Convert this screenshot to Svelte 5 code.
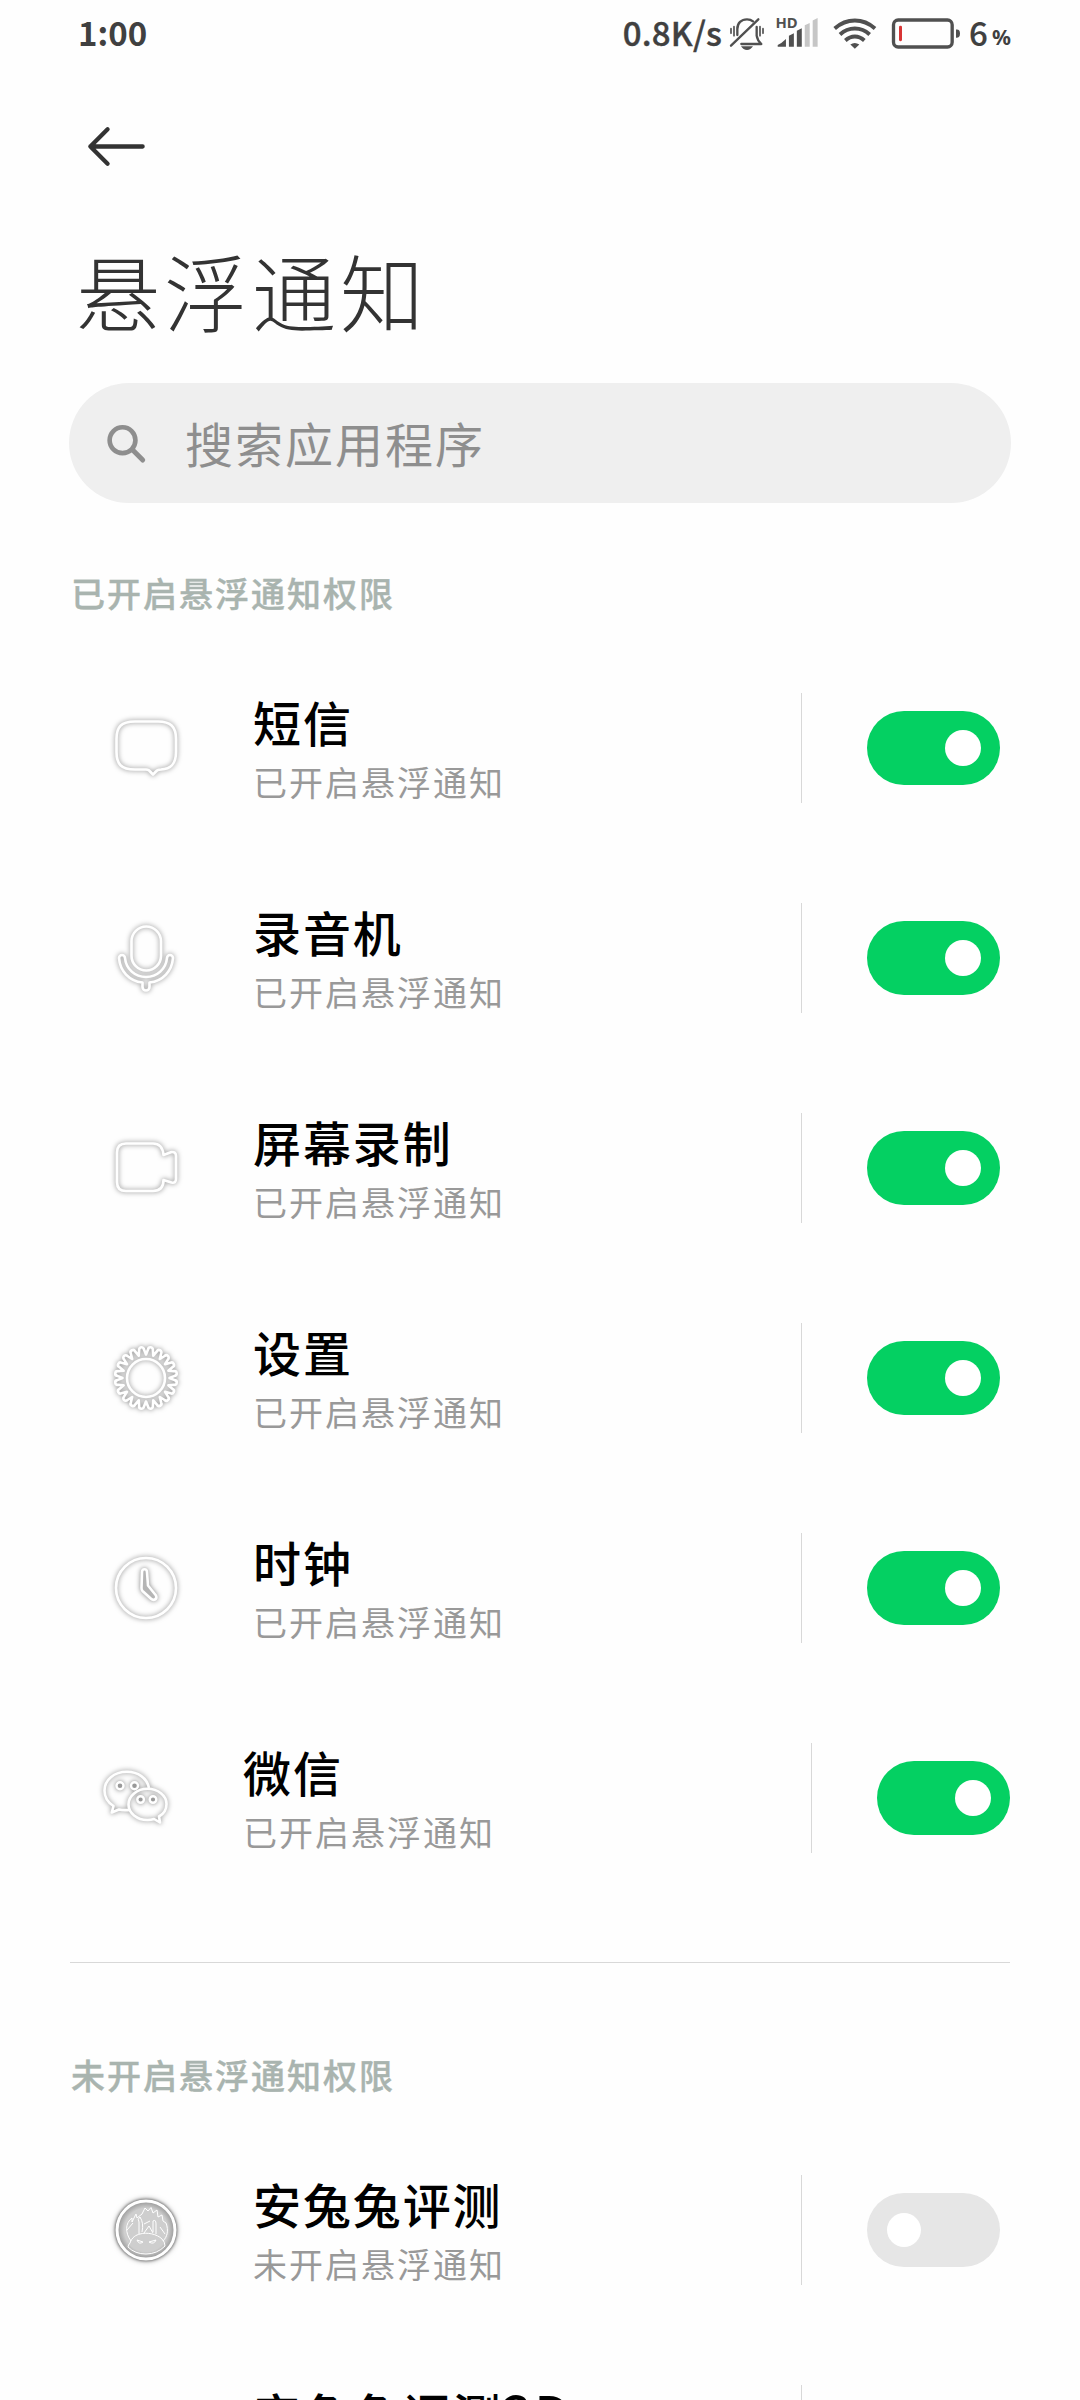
<script>
  let enabledApps = $state([
    { name: '短信', icon: 'message', on: true },
    { name: '录音机', icon: 'recorder', on: true },
    { name: '屏幕录制', icon: 'camera', on: true },
    { name: '设置', icon: 'settings', on: true },
    { name: '时钟', icon: 'clock', on: true },
    { name: '微信', icon: 'wechat', on: true, wide: true }
  ]);
  let disabledApps = $state([
    { name: '安兔兔评测', icon: 'antutu', on: false },
    { name: '安兔兔评测', suffix: '3D', icon: '', on: false }
  ]);

  // outline of the settings gear, 20 rounded teeth
  function gearPath(cx, cy, teeth) {
    const step = 360 / teeth;
    const point = (r, deg) => {
      const a = ((deg - 90) * Math.PI) / 180;
      return `${(cx + r * Math.cos(a)).toFixed(2)} ${(cy + r * Math.sin(a)).toFixed(2)}`;
    };
    let d = `M${point(23.5, 0)}`;
    for (let i = 0; i < teeth; i++) {
      const mid = i * step + step / 2;
      d += `L${point(28.8, mid - 4.8)}A2.4 2.4 0 0 1 ${point(28.8, mid + 4.8)}L${point(23.5, (i + 1) * step)}`;
    }
    return d + 'Z';
  }
  const gear = gearPath(56, 58, 20);
</script>

{#snippet appIcon(icon)}
  <svg class="app-icon" viewBox="0 -2 120 120">
    {#if icon === 'message'}
      <path d="M45 31.5H68C81 31.5 86 37 86 49V62C86 74 81 79 71 79.500Q67 79.500 65.500 82L63 84.500L60.500 82Q59 79.500 56 79.500H45C31 79.500 26.500 74 26.500 62V49C26.500 37 31 31.500 45 31.500Z" />
    {:else if icon === 'recorder'}
      <rect x="41.500" y="26.500" width="29.500" height="44" rx="14.750" />
      <path d="M29 58a3 3 0 0 1 6 0C36 69 45 77 56 77S76 69 77 58a3 3 0 0 1 6 0C82 71 73 81 59.500 82.500V87a3.500 3.500 0 0 1-7 0V82.500C39 81 30 71 29 58Z" />
    {:else if icon === 'camera'}
      <path d="M36 33.500H63Q72.500 33.500 73.500 45L81.500 42Q86 41.500 86 46V69Q86 73.500 81.500 72.500L73.500 70Q73.500 81 63 81H36Q27 81 27 72V42.500Q27 33.500 36 33.500Z" />
    {:else if icon === 'settings'}
      <path d={gear} />
      <circle cx="56" cy="58" r="19" />
    {:else if icon === 'clock'}
      <circle cx="56" cy="58" r="30" />
      <path class="hands" d="M52 42q.2-2.700 2.500-2.700t2.500 2.700L58 55.500L66 65.500q1.300 3-1.500 4.300q-2 .4-3.500-1L52.500 61Q51.500 60 51.500 58Z" />
    {:else if icon === 'wechat'}
      <path d="M69 48C67 38 58 31.800 47 31.800C34 31.800 24.500 40 24.500 50.500C24.500 57 28 62.500 33.500 66L31.800 72.500L39 69.500Q43 70.500 49.500 70" />
      <path d="M67.500 48.800C78 48.800 86.500 55.500 86.500 64C86.500 69.500 83.500 74 79 76.500L80 82.500L74 79Q71 80 67.500 80C57 80 48.500 73 48.500 64.500S57 48.800 67.500 48.800Z" />
      <g class="eyes">
        <circle cx="40" cy="45.700" r="3.500" /><circle cx="54.500" cy="45.700" r="3.500" />
        <circle cx="60.600" cy="59.500" r="3.300" /><circle cx="73" cy="59.500" r="3.300" />
      </g>
    {:else if icon === 'antutu'}
      <defs>
        <radialGradient id="coin">
          <stop offset="0.75" stop-color="#cecece" />
          <stop offset="1" stop-color="#969696" />
        </radialGradient>
      </defs>
      <circle class="coin" cx="56" cy="58" r="29" fill="url(#coin)" />
      <g class="rabbit">
        <path d="M41 69C35 61 35 51 42 46L42 50L46 42L47 46Q53 43 55 36L58 39L61 35.500L63 41L67 38L68 45L72 43L73 49L76 51C79 59 77 65 73 69" />
        <path d="M40 71C42 65 46 63 50 62C57 60 67 62 72 67Q75 70 75 74Q67 82 56 82T38 75Q38 73 40 71Z" />
        <path d="M49 62V50Q47 47 50 45Q54 51 52 60M54 61L59 54L63 61M63 60V49Q66 47 66 52L66 62M54 52L60 49M37 58L43 51M70 55L75 62" />
        <path d="M47 68L53 70Q49 73 47 68ZM66 68L59 70Q64 73 66 68Z" />
      </g>
    {/if}
  </svg>
{/snippet}

{#snippet appRow(app)}
  <div class="row" class:wide={app.wide}>
    {@render appIcon(app.icon)}
    <div class="info">
      <div class="name">{app.name}{#if app.suffix}<span class="latin">{app.suffix}</span>{/if}</div>
      <div class="state">{app.on ? '已开启悬浮通知' : '未开启悬浮通知'}</div>
    </div>
    <div class="separator"></div>
    <button
      class="toggle"
      class:on={app.on}
      role="switch"
      aria-checked={app.on}
      aria-label={app.name}
      onclick={() => (app.on = !app.on)}
    >
      <span class="knob"></span>
    </button>
  </div>
{/snippet}

<main>
  <div class="statusbar">
    <span class="time">1:00</span>
    <span class="speed">0.8K/s</span>
    <svg class="bell" viewBox="387 45 108 105">
      <g fill="none" stroke="#505050" stroke-width="7" stroke-linecap="round" stroke-linejoin="round">
        <path d="M412 102V84C412 66 424 55 441 55Q452 55 459 61M470 78V104Q472 118 484 129H424" />
        <path d="M393 134L475 55" />
        <path d="M393 83V97M402 77V104M480 77V104M489 83V97" stroke-width="5" />
      </g>
      <path d="M423 136H459Q452 147 441 147T423 136Z" fill="#505050" />
    </svg>
    <svg class="signal" viewBox="528 45 130 100">
      <text x="526" y="84" font-size="45" font-weight="700" fill="#505050">HD</text>
      <path d="M533 141V136Q545 131 558 118V141ZM567 141V108L582 100V141ZM591 141V93L606 85V141Z" fill="#505050" />
      <path d="M615 141V76L630 69V141ZM639 141V62L654 54V141Z" fill="#c6c6c6" />
    </svg>
    <svg class="wifi" viewBox="700 50 132 98">
      <g fill="none" stroke="#505050" stroke-width="11.500">
        <path d="M705 84Q732 60 765.500 60T826 84" />
        <path d="M721 102Q740 84 765.500 84T810 102" />
        <path d="M737 120Q750 108 765.500 108T794 120" />
      </g>
      <path d="M752 132Q765 123 779 132L765.500 145Z" fill="#505050" />
    </svg>
    <svg class="battery" viewBox="873 50 210 98">
      <rect x="880.500" y="58.500" width="176" height="81" rx="14" fill="none" stroke="#505050" stroke-width="10" />
      <rect x="897" y="76" width="9" height="46" rx="4" fill="#d83434" />
      <path d="M1068 87Q1080 85 1080 99T1068 112Z" fill="#505050" />
    </svg>
    <span class="level">6</span>
    <span class="percent">%</span>
  </div>

  <button class="back" aria-label="返回">
    <svg viewBox="108 374 184 130">
      <path d="M173 387L121 439L173 491M121 439H279" fill="none" stroke="#333" stroke-width="13" stroke-linecap="round" stroke-linejoin="round" />
    </svg>
  </button>

  <h1>悬浮通知</h1>

  <div class="search">
    <svg viewBox="168 160 124 124">
      <g fill="none" stroke="#8e8e8e" stroke-linecap="round">
        <circle cx="218" cy="212" r="39" stroke-width="14" />
        <path d="M248 241L279 272" stroke-width="15" />
      </g>
    </svg>
    <span>搜索应用程序</span>
  </div>

  <h2>已开启悬浮通知权限</h2>
  {#each enabledApps as app}
    {@render appRow(app)}
  {/each}

  <hr />

  <h2>未开启悬浮通知权限</h2>
  {#each disabledApps as app}
    {@render appRow(app)}
  {/each}
</main>

<style>
  :global(body) {
    margin: 0;
    background: #fefefe;
  }

  main {
    width: 1080px;
    height: 2400px;
    overflow: hidden;
    background: #fefefe;
    font-family: 'Noto Sans CJK SC', 'Noto Sans', sans-serif;
  }

  svg {
    display: block;
    flex: none;
  }

  button {
    padding: 0;
    border: none;
    background: none;
  }

  .statusbar {
    display: flex;
    align-items: center;
    box-sizing: border-box;
    height: 66px;
    padding: 0 69px 0 78px;
    color: #404040;
    font-size: 33px;
    font-weight: 500;
    line-height: 64px;
  }

  .statusbar span {
    height: 66px;
  }

  .time {
    font-weight: 700;
    margin-right: auto;
  }

  .speed {
    margin-right: 7px;
    letter-spacing: 0.2px;
    -webkit-text-stroke: 0.4px #404040;
  }

  .bell {
    width: 36px;
    height: 35px;
    margin-right: 11px;
  }

  .signal {
    width: 43px;
    height: 33px;
    margin: 0 14px 4px 0;
    overflow: visible;
    font-family: 'Noto Sans', sans-serif;
  }

  .wifi {
    width: 44px;
    height: 33px;
    margin-right: 14px;
  }

  .battery {
    width: 70px;
    height: 33px;
    margin-right: 8px;
  }

  .level {
    width: 19px;
    -webkit-text-stroke: 0.2px #404040;
  }

  .percent {
    box-sizing: border-box;
    width: 19px;
    margin-left: 4px;
    padding-top: 5px;
    font-family: 'Noto Sans', sans-serif;
    font-size: 21px;
    font-weight: 700;
  }

  .back {
    display: block;
    margin: 59px 0 0 86px;
  }

  .back svg {
    width: 61px;
    height: 43px;
  }

  h1 {
    margin: 60px 0 0 76px;
    color: #333;
    font-size: 84px;
    font-weight: 300;
    line-height: 124px;
    letter-spacing: 4px;
  }

  .search {
    display: flex;
    align-items: center;
    box-sizing: border-box;
    height: 120px;
    margin: 31px 69px 0;
    padding-left: 37px;
    border-radius: 60px;
    background: #efefef;
    color: #8e8e8e;
    font-size: 48px;
    letter-spacing: 2px;
  }

  .search svg {
    width: 41px;
    height: 41px;
    margin-right: 38px;
  }

  .search span {
    padding-bottom: 3px;
  }

  h2 {
    margin: 65px 0 25px 71px;
    color: #a9b4af;
    font-size: 34px;
    font-weight: 500;
    line-height: 50px;
    letter-spacing: 2px;
    -webkit-text-stroke: 0.4px #a9b4af;
  }

  .row {
    display: flex;
    align-items: center;
    height: 210px;
    padding: 0 80px 0 90px;
  }

  .row.wide {
    padding: 0 70px 0 80px;
  }

  .app-icon {
    width: 120px;
    height: 120px;
    margin-right: 43px;
    fill: none;
    stroke: #fff;
    stroke-width: 2.600;
    stroke-linejoin: round;
    filter: drop-shadow(0 0 2.400px rgba(0, 0, 0, 0.5));
  }

  .hands {
    fill: #b5b5b5;
  }

  .eyes {
    fill: #999;
    stroke-width: 2.400;
  }

  .coin {
    stroke-width: 3;
    filter: drop-shadow(0 0 1.500px rgba(0, 0, 0, 0.5));
  }

  .rabbit {
    stroke-width: 1;
  }

  .info {
    flex: 1;
    white-space: nowrap;
  }

  .name {
    height: 63px;
    padding-bottom: 4px;
    color: #000;
    font-size: 48px;
    font-weight: 500;
    line-height: 63px;
    letter-spacing: 1.900px;
  }

  .latin {
    font-size: 51px;
    line-height: 0;
    letter-spacing: 3px;
  }

  .state {
    color: #999;
    font-size: 34px;
    line-height: 50px;
    letter-spacing: 2px;
  }

  .separator {
    width: 1px;
    height: 110px;
    margin-right: 65px;
    background: #d8d8d8;
  }

  .toggle {
    display: flex;
    align-items: center;
    flex: none;
    box-sizing: border-box;
    width: 133px;
    height: 74px;
    padding: 0 20px;
    border-radius: 37px;
    background: #e6e6e6;
  }

  .toggle.on {
    justify-content: flex-end;
    padding: 0 19px;
    background: #04d062;
  }

  .knob {
    width: 34px;
    height: 34px;
    border-radius: 50%;
    background: #fff;
  }

  .on .knob {
    width: 36px;
    height: 36px;
  }

  hr {
    height: 1px;
    margin: 59px 70px 0;
    border: none;
    background: #d8d8d8;
  }

  hr + h2 {
    margin-top: 87px;
  }
</style>
